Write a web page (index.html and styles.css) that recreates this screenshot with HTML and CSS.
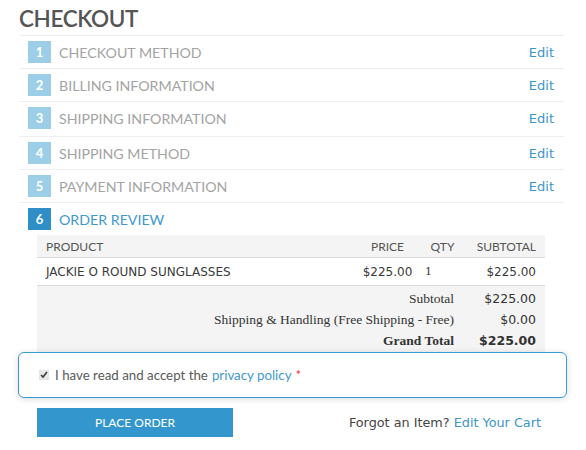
FILE: index.html
```html
<!DOCTYPE html>
<html>
<head>
<meta charset="utf-8">
<link rel="stylesheet" href="styles.css">
</head>
<body>
<div class="page">
  <h1 class="title">CHECKOUT</h1>
  <ol class="steps">
    <li class="step"><span class="num">1</span><span class="name">CHECKOUT METHOD</span><a class="edit">Edit</a></li>
    <li class="step"><span class="num">2</span><span class="name">BILLING INFORMATION</span><a class="edit">Edit</a></li>
    <li class="step step-tall"><span class="num">3</span><span class="name">SHIPPING INFORMATION</span><a class="edit">Edit</a></li>
    <li class="step"><span class="num">4</span><span class="name">SHIPPING METHOD</span><a class="edit">Edit</a></li>
    <li class="step"><span class="num">5</span><span class="name">PAYMENT INFORMATION</span><a class="edit">Edit</a></li>
    <li class="step step-active"><span class="num">6</span><span class="name">ORDER REVIEW</span></li>
  </ol>
  <div class="review">
    <div class="trow thead">
      <span class="c-prod">PRODUCT</span>
      <span class="c-price">PRICE</span>
      <span class="c-qty">QTY</span>
      <span class="c-sub">SUBTOTAL</span>
    </div>
    <div class="trow tbody">
      <span class="c-prod">JACKIE O ROUND SUNGLASSES</span>
      <span class="c-price">$225.00</span>
      <span class="c-qty qty-val">1</span>
      <span class="c-sub">$225.00</span>
    </div>
    <div class="totals">
      <span class="t-label">Subtotal</span><span class="t-val">$225.00</span>
      <span class="t-label">Shipping &amp; Handling (Free Shipping - Free)</span><span class="t-val">$0.00</span>
      <span class="t-label grand">Grand Total</span><span class="t-val grand">$225.00</span>
    </div>
  </div>
  <div class="agree">
    <label class="agree-label"><input type="checkbox" class="chk" checked> I have read and accept the <a class="link">privacy policy</a> <span class="req">*</span></label>
  </div>
  <div class="actions">
    <button class="place">PLACE ORDER</button>
    <div class="forgot">Forgot an Item? <a class="link2">Edit Your Cart</a></div>
  </div>
</div>
</body>
</html>
```
FILE: styles.css
```css
html, body { margin: 0; padding: 0; background: #fff; }
.page { padding-left: 19px; width: 545px; font-family: Lato, "Open Sans", sans-serif; }
.title { font-family: Lato, sans-serif; font-weight: 600; font-size: 22.5px; line-height: 28px; color: #555; margin: 5px 0 2px; letter-spacing: -0.4px; }
.steps { list-style: none; margin: 0; padding: 0; }
.step { display: flex; align-items: center; height: 33px; box-sizing: border-box; border-top: 1px solid #eee; padding-left: 9px; padding-right: 10px; }
.step-tall { height: 35px; padding-bottom: 2px; border-top: 1px solid #eee; }
.num { width: 23px; height: 22px; background: #9ccfe7; color: #fff; font-weight: 700; font-size: 13px; display: flex; align-items: center; justify-content: center; margin-right: 8px; }
.name { font-size: 14.2px; font-weight: 400; color: #a4a4a4; flex: 1; letter-spacing: 0; }
.edit { font-family: "DejaVu Sans", Verdana, sans-serif; font-size: 13px; color: #3b96c9; }
.step-active .num { background: #2f8ec6; }
.step-active .name { color: #3f98cc; }
.review { margin-left: 18px; width: 508px; background: #f4f4f4; }
.trow { display: grid; grid-template-columns: 309px 65px 45px 71px; padding: 0 9px; align-items: center; }
.thead { height: 22px; border-bottom: 1px solid #ddd; font-size: 12px; font-weight: 400; color: #555; }
.tbody { height: 27px; background: #fff; border-bottom: 1px solid #d9d9d9; font-family: "DejaVu Sans", Verdana, sans-serif; font-size: 12px; color: #3a3a3a; }
.c-price { text-align: center; }
.c-qty { text-align: center; }
.qty-val { text-align: left; padding-left: 5px; font-family: "DejaVu Serif", Georgia, serif; font-size: 11px; }
.c-sub { text-align: right; }
.totals { display: grid; grid-template-columns: 1fr 71px; column-gap: 11px; padding: 2px 9px 1px; font-family: "Liberation Serif", "Times New Roman", serif; font-size: 13.5px; line-height: 21px; color: #333; }
.t-label { text-align: right; }
.t-val { text-align: right; font-family: "DejaVu Sans", Verdana, sans-serif; font-size: 12.5px; }
.grand { font-weight: 700; }
.agree { margin-left: -1px; width: 549px; height: 46px; box-sizing: border-box; border: 1px solid #3a9ad6; border-radius: 6px; box-shadow: 0 1px 6px rgba(0,0,0,0.15); display: flex; align-items: center; padding-left: 20px; background: #fff; position: relative; }
.agree-label { font-size: 13.3px; font-weight: 400; color: #5a5a5a; display: flex; align-items: center; }
.chk { margin: 0 6px 0 0; width: 10px; height: 10px; accent-color: #e8e8e8; }
.link { color: #3f98cc; margin-left: 4px; }
.req { color: #e04040; margin-left: 4px; }
.actions { display: flex; align-items: center; justify-content: space-between; margin-top: 9px; padding-left: 18px; padding-right: 23px; }
.place { width: 196px; height: 29px; border: 0; background: #3397cd; color: #fff; font-family: Lato, sans-serif; font-size: 12px; padding: 0; margin-top: 1px; }
.forgot { font-family: "DejaVu Sans", Verdana, sans-serif; font-size: 12.8px; color: #444; }
.link2 { color: #3b96c9; }
```
